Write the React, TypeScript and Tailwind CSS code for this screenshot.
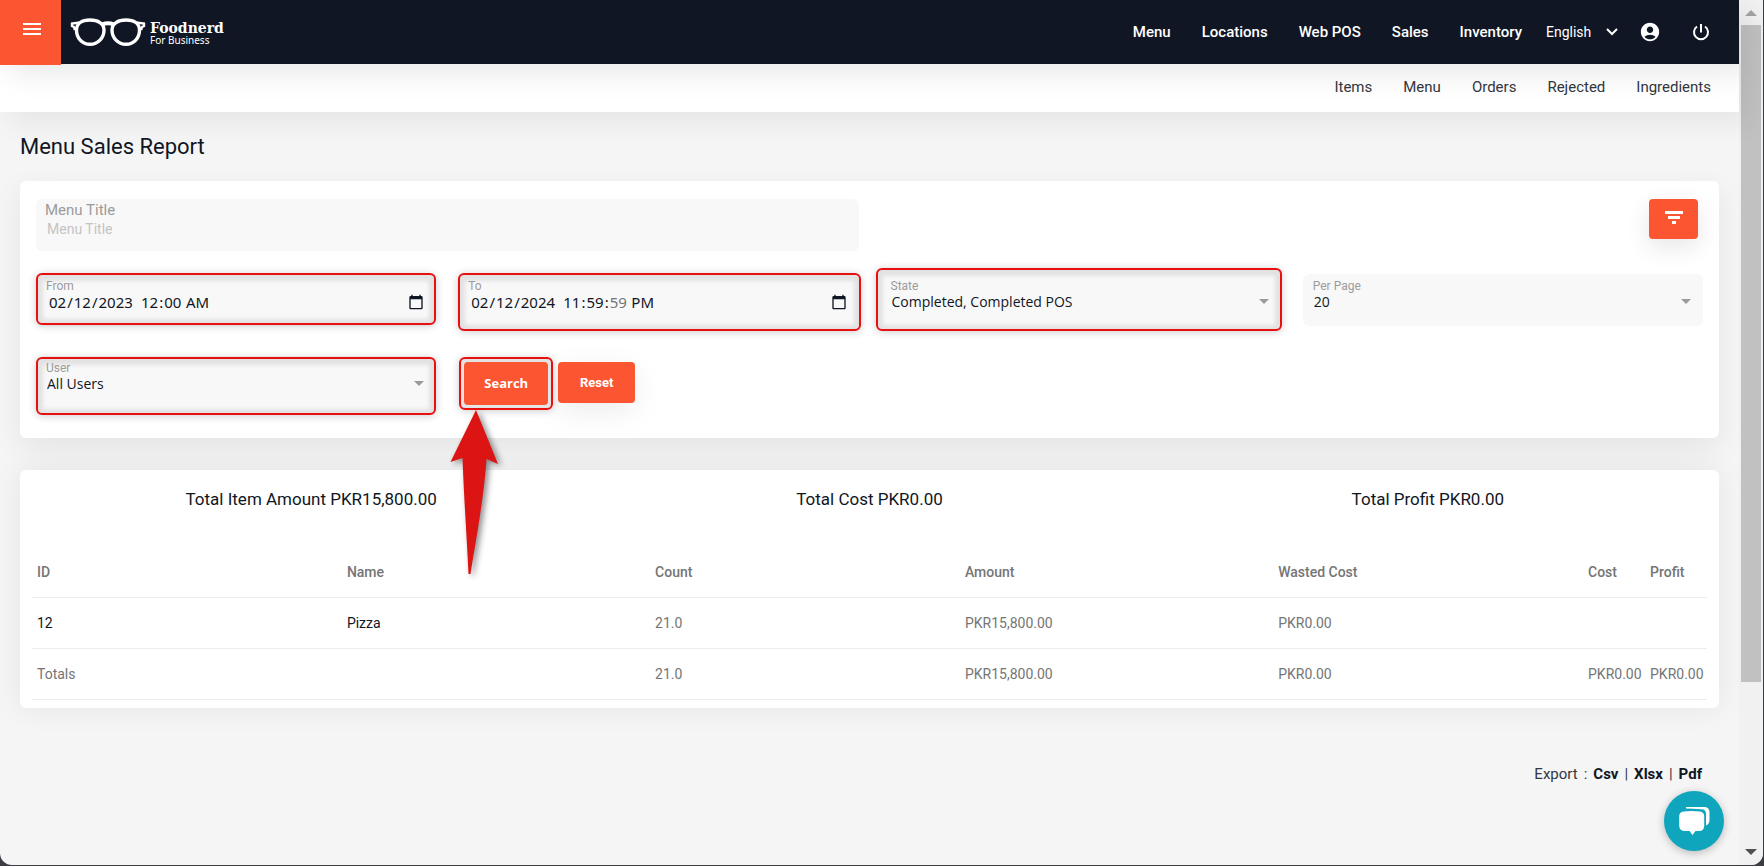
import React, { useState } from "react";
import { MdAccountCircle, MdArrowDropDown, MdCalendarToday, MdMenu } from "react-icons/md";

const mainLinks = ["Menu", "Locations", "Web POS", "Sales", "Inventory"];
const subLinks = ["Items", "Menu", "Orders", "Rejected", "Ingredients"];
const totals = ["Total Item Amount PKR15,800.00", "Total Cost PKR0.00", "Total Profit PKR0.00"];
const columns = [
  { name: "ID", width: "w-[18.5%]" },
  { name: "Name", width: "w-[18.4%]" },
  { name: "Count", width: "w-[18.5%]" },
  { name: "Amount", width: "w-[18.7%]" },
  { name: "Wasted Cost", width: "w-[18.5%]" },
  { name: "Cost", width: "w-[62px]" },
  { name: "Profit", width: "" },
];
const rows = [
  ["12", "Pizza", "21.0", "PKR15,800.00", "PKR0.00", "", ""],
  ["Totals", "", "21.0", "PKR15,800.00", "PKR0.00", "PKR0.00", "PKR0.00"],
];

const Logo = () => (
  <a href="#" className="flex items-center gap-1 text-white">
    <svg width="76" height="30" viewBox="0 0 76 30" fill="none" stroke="white">
      <path
        d="M20 3 C28 3 34 6.500 34 13 C34 21 28 27.300 20 27.300 C12 27.300 6.500 21 6.500 13 C6.500 6.500 12 3 20 3 Z"
        strokeWidth="3.4"
      />
      <path
        d="M56 3 C64 3 69.500 6.500 69.500 13 C69.500 21 64 27.300 56 27.300 C48 27.300 42 21 42 13 C42 6.500 48 3 56 3 Z"
        strokeWidth="3.4"
      />
      <path d="M32 7.5 Q38 5 44 7.500" strokeWidth="4" />
      <path d="M10 5.5 L2 6.5 V9 L4 10 L5 13" strokeWidth="2.4" />
      <path d="M66 5.5 L74 6.5 V9 L72 10 L71 13" strokeWidth="2.4" />
    </svg>
    <span className="flex flex-col">
      <span className="font-['DejaVu_Serif',serif] text-[14px] leading-4 font-bold">Foodnerd</span>
      <span className="font-['Noto_Sans',sans-serif] text-[10px] leading-2">For Business</span>
    </span>
  </a>
);

// Red frame drawn around a field, with soft shadow on both sides
const Highlight = ({ className }: { className: string }) => (
  <span
    className={`pointer-events-none absolute rounded-md border-2 border-[#e8100f] bg-[#f8f8f8] shadow-[0_1px_8px_rgba(0,0,0,0.2),inset_0_1px_4px_5px_rgba(0,0,0,0.09)] ${className}`}
  />
);

const Field = ({
  label,
  id,
  highlight,
  children,
}: {
  label: string;
  id: string;
  highlight?: string;
  children: React.ReactNode;
}) => (
  <div className="relative h-[52px] rounded-md bg-[#f8f8f8]">
    {highlight && <Highlight className={highlight} />}
    <div className="relative flex flex-col pt-[5px]">
      <label htmlFor={id} className="px-[10px] text-[12px] leading-[14px] text-[#9b9b9b]">
        {label}
      </label>
      {children}
    </div>
  </div>
);

const SelectBox = ({ id, value }: { id: string; value: string }) => (
  <div className="relative">
    <select
      id={id}
      defaultValue={value}
      className="block h-[18px] w-full appearance-none bg-transparent px-[11px] font-['Open_Sans',sans-serif] text-[14px] leading-[18px] outline-none"
    >
      <option>{value}</option>
    </select>
    <MdArrowDropDown
      size={24}
      className="pointer-events-none absolute -top-1 right-[5px] text-[#9b9b9b]"
    />
  </div>
);

const DateTimeBox = ({
  id,
  date,
  time,
  step,
}: {
  id: string;
  date: string;
  time: string;
  step?: number;
}) => (
  <div className="flex h-[18px] items-center px-3 font-['Noto_Sans',sans-serif] text-[15px] leading-[18px]">
    <input
      id={id}
      type="date"
      defaultValue={date}
      className="w-[88px] bg-transparent outline-none [&::-webkit-calendar-picker-indicator]:hidden"
    />
    <input
      type="time"
      aria-label="Time"
      step={step}
      defaultValue={time}
      className="ml-1 bg-transparent outline-none [&::-webkit-calendar-picker-indicator]:hidden [&::-webkit-datetime-edit-second-field]:text-[#757575]"
    />
    <button type="button" aria-label="Pick a date" className="ml-auto">
      <MdCalendarToday size={16} />
    </button>
  </div>
);

const App = () => {
  const [title, setTitle] = useState("");

  return (
    <div className="flex min-h-screen bg-[#3c3c43] pr-px pb-px font-[Roboto,sans-serif] text-[#101624]">
      <div className="flex flex-1 overflow-hidden rounded-b-xl bg-[#f5f5f5]">
        <div className="relative flex-1">
          {/* Top bar */}
          <header className="relative z-20 flex h-16 items-center bg-[#101624] text-white shadow-[10px_10px_30px_rgba(0,0,0,0.09)]">
            <button
              aria-label="Toggle menu"
              className="flex h-[65px] w-[61px] justify-center self-start bg-[#fc5531] pt-[17px] pl-[2px]"
            >
              <MdMenu size={24} />
            </button>
            <div className="ml-[9px]">
              <Logo />
            </div>
            <nav className="ml-auto flex items-center gap-[31px] text-[15px] font-medium">
              {mainLinks.map((link) => (
                <a key={link} href="#">
                  {link}
                </a>
              ))}
            </nav>
            <div className="relative ml-6 flex items-center">
              <select
                aria-label="Language"
                className="w-[77px] appearance-none bg-transparent text-[14px] outline-none"
              >
                <option>English</option>
              </select>
              <svg
                width="14"
                height="8"
                viewBox="0 0 14 8"
                className="pointer-events-none absolute right-1"
                fill="none"
                stroke="white"
                strokeWidth="2"
              >
                <path d="M2 1 L7 6 L12 1" />
              </svg>
            </div>
            <a href="#" aria-label="Account" className="ml-4">
              <MdAccountCircle size={22} />
            </a>
            <a href="#" aria-label="Log out" className="mr-7 ml-[30px]">
              <svg width="20" height="20" viewBox="0 0 20 20" fill="none" stroke="white" strokeWidth="2">
                <path d="M10 2 V10.500" />
                <path d="M6 4.500 A7 7 0 1 0 14 4.500" />
              </svg>
            </a>
          </header>

          {/* Sub navigation */}
          <nav className="relative z-10 flex h-12 items-center justify-end gap-[31px] bg-white px-7 pb-[2px] text-[15px] text-[#33373f] shadow-[10px_10px_30px_rgba(0,0,0,0.07)]">
            {subLinks.map((link) => (
              <a key={link} href="#">
                {link}
              </a>
            ))}
          </nav>

          <main className="px-5">
            <h1 className="pt-[19px] pb-[18px] text-[22px] leading-8">Menu Sales Report</h1>

            {/* Filters */}
            <form
              onSubmit={(e) => e.preventDefault()}
              className="rounded-md bg-white px-4 pt-[18px] pb-[30px] shadow-[0_10px_30px_rgba(0,0,0,0.07)]"
            >
              <div className="grid grid-cols-4 gap-x-[22px]">
                <div className="col-span-2 flex h-[52px] flex-col rounded-md bg-[#f8f8f8] pt-[2px]">
                  <label htmlFor="title" className="px-[9px] text-[15px] leading-[18px] text-[#9b9b9b]">
                    Menu Title
                  </label>
                  <input
                    id="title"
                    value={title}
                    onChange={(e) => setTitle(e.target.value)}
                    placeholder="Menu Title"
                    className="bg-transparent px-[11px] text-[14px] leading-5 outline-none placeholder:text-[#c4c4c4]"
                  />
                </div>
                <div className="col-span-2 flex justify-end pr-[5px]">
                  <button
                    type="button"
                    aria-label="Filters"
                    className="flex h-10 w-[49px] justify-center rounded bg-[#fc5531] pt-3 text-white shadow-[0_8px_24px_rgba(0,0,0,0.1)]"
                  >
                    <svg width="18" height="13" viewBox="0 0 18 13" fill="white">
                      <path d="M0 0 H18 V3 H0 Z M3 5 H15 V8 H3 Z M7 10 H11 V13 H7 Z" />
                    </svg>
                  </button>
                </div>
              </div>

              <div className="mt-[23px] grid grid-cols-4 gap-x-[22px] gap-y-[30px]">
                <Field label="From" id="from" highlight="inset-x-0 -top-px bottom-px">
                  <DateTimeBox id="from" date="2023-02-12" time="00:00" />
                </Field>
                <Field label="To" id="to" highlight="left-0 -right-[2px] -top-px -bottom-[5px]">
                  <DateTimeBox id="to" date="2024-02-12" time="23:59:59" step={1} />
                </Field>
                <Field label="State" id="state" highlight="-left-[5px] -right-px -top-[6px] -bottom-[5px]">
                  <SelectBox id="state" value="Completed, Completed POS" />
                </Field>
                <Field label="Per Page" id="per-page">
                  <SelectBox id="per-page" value="20" />
                </Field>
                <Field label="User" id="user" highlight="inset-x-0 top-px -bottom-[7px]">
                  <SelectBox id="user" value="All Users" />
                </Field>
                <div className="flex items-start gap-[10px] pt-[6px] pl-[6px] text-[13px] font-bold text-white">
                  <div className="relative">
                    <Highlight className="-inset-[5px]" />
                    <button
                      type="submit"
                      className="relative h-[43px] w-[84px] rounded bg-[#fc5531] font-['Open_Sans',sans-serif]"
                    >
                      Search
                    </button>
                    {/* Pointer below the button */}
                    <svg
                      width="60"
                      height="176"
                      viewBox="0 0 60 176"
                      className="pointer-events-none absolute top-full -left-[14px] z-10 mt-[5px] drop-shadow-[3px_2px_3px_rgba(0,0,0,0.45)]"
                    >
                      <path
                        d="M26 0 L48 54 L36.500 49 C34 88 25 135 20.500 164 L18.500 164 C17 130 14 90 12.500 48 L0.500 52 Z"
                        fill="#dc1414"
                      />
                    </svg>
                  </div>
                  <button
                    type="reset"
                    onClick={() => setTitle("")}
                    className="h-[41px] w-[77px] rounded bg-[#fc5531] shadow-[0_8px_30px_rgba(0,0,0,0.08)]"
                  >
                    Reset
                  </button>
                </div>
              </div>
            </form>

            {/* Report */}
            <section className="mt-8 rounded-md bg-white px-3 pt-4 pb-2 shadow-[0_0_30px_rgba(0,0,0,0.07)]">
              <div className="grid grid-cols-3 text-center text-[17px] leading-[26px]">
                {totals.map((total) => (
                  <p key={total}>{total}</p>
                ))}
              </div>
              <table className="mt-[34px] w-full table-fixed text-left text-[14px] text-[#757575]">
                <thead>
                  <tr className="h-[51px] border-b border-[#ececec]">
                    {columns.map((col) => (
                      <th key={col.name} className={`px-[5px] pt-[2px] font-medium ${col.width}`}>
                        {col.name}
                      </th>
                    ))}
                  </tr>
                </thead>
                <tbody>
                  {rows.map((row, index) => (
                    <tr key={index} className="h-[51px] border-b border-[#ececec]">
                      {row.map((cell, i) => (
                        <td
                          key={i}
                          className={
                            index === 0 && i < 2 ? "px-[5px] pt-[2px] text-[#101624]" : "px-[5px] pt-[2px]"
                          }
                        >
                          {cell}
                        </td>
                      ))}
                    </tr>
                  ))}
                </tbody>
              </table>
            </section>

            <p className="mt-14 flex justify-end gap-[6px] pr-[17px] text-[15px] leading-5 text-[#33373f]">
              <span>Export</span>
              <span>:</span>
              <a href="#" className="font-bold text-[#101624]">Csv</a>
              <span>|</span>
              <a href="#" className="font-bold text-[#101624]">Xlsx</a>
              <span>|</span>
              <a href="#" className="font-bold text-[#101624]">Pdf</a>
            </p>
          </main>

          {/* Chat bubble */}
          <button
            aria-label="Open chat"
            className="absolute right-[15px] bottom-[14px] flex size-15 items-center justify-center rounded-full bg-[#0fa5bd] shadow-[0_2px_8px_rgba(0,0,0,0.25)]"
          >
            <svg width="32" height="30" viewBox="0 0 32 30" fill="white">
              <path d="M8 1 H26 Q31.500 1 31.500 6.500 V14 Q31.500 18 28 19.500 V8 Q28 3.500 23.500 3.300 Q15 2.500 8 2.500 Z" />
              <path d="M5.500 5.500 Q14 4.500 22 5.500 Q26 6 26.200 10 V20 Q26 24.500 22 25 H17.500 L14.500 29 L11.500 25 H6 Q1.500 24.500 1.200 20 V10 Q1.300 6 5.500 5.500 Z" />
            </svg>
          </button>
        </div>

        {/* Scroll bar */}
        <div aria-hidden="true" className="flex w-6 flex-col items-center bg-[#f1f1f1]">
          <svg width="12" height="25" viewBox="0 0 12 25" fill="#a3a3a3" className="shrink-0">
            <path d="M0 16 L6 10 L12 16 Z" />
          </svg>
          <div className="h-[76%] w-5 bg-[#c1c1c1]" />
          <svg width="12" height="25" viewBox="0 0 12 25" fill="#505050" className="mt-auto shrink-0">
            <path d="M0 9 L6 15 L12 9 Z" />
          </svg>
        </div>
      </div>
    </div>
  );
};

export default App;
